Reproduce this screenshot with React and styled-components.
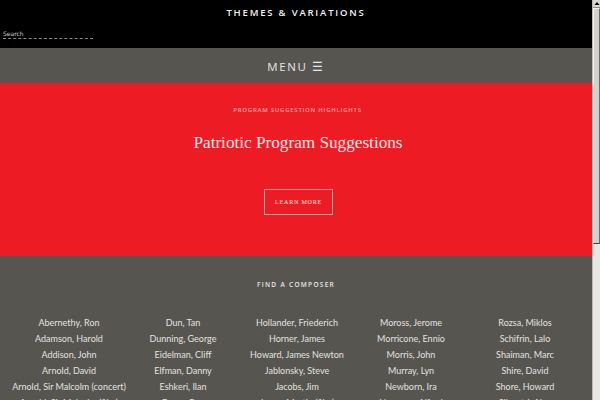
import React from 'react';
import styled, { createGlobalStyle } from 'styled-components';

const GlobalStyle = createGlobalStyle`
  html, body {
    margin: 0;
    padding: 0;
    height: 400px;
    overflow: hidden;
    background: #000;
  }
  * { box-sizing: border-box; }
`;

const composers = [
  ['Abernethy, Ron', 'Adamson, Harold', 'Addison, John', 'Arnold, David', 'Arnold, Sir Malcolm (concert)', 'Arnold, Sir Malcolm (film)'],
  ['Dun, Tan', 'Dunning, George', 'Eidelman, Cliff', 'Elfman, Danny', 'Eshkeri, Ilan', 'Evans, Ray'],
  ['Hollander, Friederich', 'Horner, James', 'Howard, James Newton', 'Jablonsky, Steve', 'Jacobs, Jim', 'Jones, Martin (film)'],
  ['Moross, Jerome', 'Morricone, Ennio', 'Morris, John', 'Murray, Lyn', 'Newborn, Ira', 'Newman, Alfred'],
  ['Rozsa, Miklos', 'Schifrin, Lalo', 'Shaiman, Marc', 'Shire, David', 'Shore, Howard', 'Silvestri, Alan'],
];

const App = () => {
  return (
    <>
      <GlobalStyle />
      <Window>
        <Page>
          <Header>
            <SiteTitle>Themes &amp; Variations</SiteTitle>
            <SearchRow>
              <SearchInput placeholder="Search" />
            </SearchRow>
          </Header>
          <Nav>
            <MenuLabel>Menu ☰</MenuLabel>
          </Nav>
          <Hero>
            <Eyebrow>Program Suggestion Highlights</Eyebrow>
            <HeroTitle>Patriotic Program Suggestions</HeroTitle>
            <LearnMore>Learn More</LearnMore>
          </Hero>
          <Composers>
            <SectionLabel>Find a Composer</SectionLabel>
            <ComposerGrid>
              {composers.map((col, i) => (
                <Column key={i}>
                  {col.map((name) => (
                    <Name key={name}>{name}</Name>
                  ))}
                </Column>
              ))}
            </ComposerGrid>
          </Composers>
        </Page>
        <Scrollbar>
          <ArrowButton>
            <svg width="6" height="5" viewBox="0 0 6 5">
              <path d="M3 1 L5.5 4 L0.5 4 Z" fill="#000" />
            </svg>
          </ArrowButton>
          <Thumb />
          <Track />
        </Scrollbar>
      </Window>
    </>
  );
};

export default App;

// Styled Components
const Window = styled.div`
  display: flex;
  width: 600px;
  height: 400px;
  overflow: hidden;
`;

const Page = styled.div`
  flex: 1;
  min-width: 0;
  height: 400px;
  overflow: hidden;
  background: #57554f;
`;

const Header = styled.header`
  height: 48px;
  background: #000;
  padding-top: 6px;
  display: flex;
  flex-direction: column;
`;

const SiteTitle = styled.div`
  text-align: center;
  font-family: 'Open Sans', sans-serif;
  font-size: 9.5px;
  font-weight: 600;
  text-transform: uppercase;
  letter-spacing: 1.8px;
  color: #f2f2f2;
  line-height: 13px;
`;

const SearchRow = styled.div`
  padding: 3px 0 0 3px;
`;

const SearchInput = styled.input`
  width: 90px;
  height: 10px;
  padding: 0;
  background: transparent;
  border: none;
  border-bottom: 1px dashed #8a8a8a;
  font-family: 'DejaVu Sans', sans-serif;
  font-size: 6px;
  color: #ddd;
  outline: none;

  &::placeholder {
    color: #cfcfcf;
  }
`;

const Nav = styled.nav`
  height: 35px;
  display: flex;
  align-items: center;
  justify-content: center;
  background: #57554f;
`;

const MenuLabel = styled.div`
  font-family: 'Open Sans', sans-serif;
  font-size: 11.5px;
  text-transform: uppercase;
  letter-spacing: 1.6px;
  color: #e6e6e6;
  padding-top: 1px;
`;

const Hero = styled.section`
  height: 173px;
  background: #ed1c24;
  display: flex;
  flex-direction: column;
  align-items: center;
  padding-top: 23px;
`;

const Eyebrow = styled.div`
  font-family: 'Open Sans', sans-serif;
  font-size: 6px;
  font-weight: 600;
  text-transform: uppercase;
  letter-spacing: 0.75px;
  color: #f7a8a8;
  line-height: 8px;
  padding-left: 3px;
`;

const HeroTitle = styled.h1`
  margin: 18px 0 0;
  font-family: 'Liberation Serif', serif;
  font-weight: normal;
  font-size: 17.2px;
  line-height: 22px;
  color: #fde8e8;
  padding-left: 4px;
`;

const LearnMore = styled.button`
  margin: 35px 0 0 5px;
  width: 69px;
  height: 26px;
  background: transparent;
  border: 1px solid #f7a0a0;
  font-family: 'Liberation Serif', serif;
  font-size: 6px;
  text-transform: uppercase;
  letter-spacing: 0.8px;
  color: #fde8e8;
  padding: 0;
  cursor: pointer;
`;

const Composers = styled.section`
  padding-top: 24px;
  display: flex;
  flex-direction: column;
  align-items: center;
`;

const SectionLabel = styled.div`
  font-family: 'Open Sans', sans-serif;
  font-size: 6.5px;
  font-weight: 600;
  text-transform: uppercase;
  letter-spacing: 1.3px;
  color: #e8e8e8;
  line-height: 10px;
`;

const ComposerGrid = styled.div`
  width: 100%;
  display: grid;
  grid-template-columns: repeat(5, 1fr);
  padding: 25px 10px 0 12px;
`;

const Column = styled.div`
  display: flex;
  flex-direction: column;
  align-items: center;
`;

const Name = styled.div`
  font-family: 'Lato', sans-serif;
  font-size: 9px;
  line-height: 16px;
  color: #e2e2e0;
  white-space: nowrap;
`;

const Scrollbar = styled.div`
  width: 8px;
  height: 400px;
  display: flex;
  flex-direction: column;
  background: #e9e7e3;
  border-left: 1px solid #bdbab4;
`;

const ArrowButton = styled.div`
  height: 8px;
  display: flex;
  align-items: center;
  justify-content: center;
  background: #d8d5cf;
  border-bottom: 1px solid #8f8c86;
`;

const Thumb = styled.div`
  height: 236px;
  background: #d4d1cb;
  border: 1px solid #f4f3f0;
  border-right-color: #6e6b66;
  border-bottom-color: #3e3c39;
`;

const Track = styled.div`
  flex: 1;
  background: #e9e7e3;
`;
